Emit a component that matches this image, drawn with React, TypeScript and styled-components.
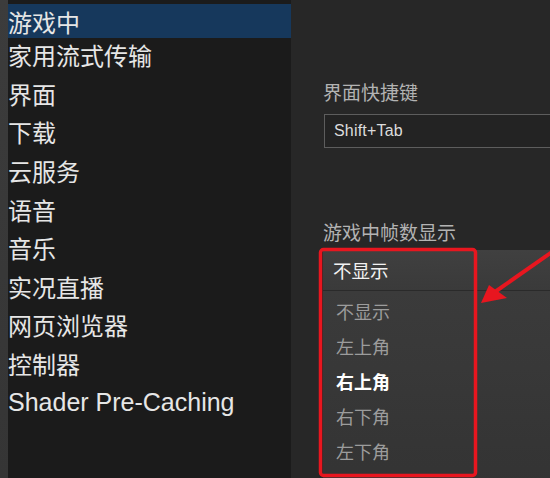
import styled, { createGlobalStyle } from 'styled-components'

const menuItems = ['游戏中', '家用流式传输', '界面', '下载', '云服务', '语音', '音乐', '实况直播', '网页浏览器', '控制器', 'Shader Pre-Caching']
const fpsOptions = ['不显示', '左上角', '右上角', '右下角', '左下角']

const GlobalStyle = createGlobalStyle`
	body {
		margin: 0;
		background: #262626;
		font-family: "Noto Sans CJK SC", "Liberation Sans", sans-serif;
	}
`

export default function App () {
	return <Page>
		<GlobalStyle />
		<EdgeStrip />
		<Menu>
			{menuItems.map((item, i) =>
				<MenuItem key={item} $active={i === 0} $latin={/^[A-Za-z]/.test(item)}>{item}</MenuItem>
			)}
		</Menu>
		<Content>
			<TopStrip />
			<Body>
				<Label>界面快捷键</Label>
				<KeyInput>Shift+Tab</KeyInput>
				<Label $second>游戏中帧数显示</Label>
				<Dropdown>
					<DropdownHeader>不显示</DropdownHeader>
					<DropdownList>
						{fpsOptions.map(opt =>
							<Option key={opt} $selected={opt === '右上角'}>{opt}</Option>
						)}
					</DropdownList>
				</Dropdown>
			</Body>
		</Content>
		<Annotation width="550" height="478" viewBox="0 0 550 478">
			<rect x="320.5" y="249.5" width="155" height="226" rx="3" fill="none" stroke="#e8161f" strokeWidth="3.5" />
			<line x1="552" y1="252" x2="492" y2="294" stroke="#e8161f" strokeWidth="4" />
			<polygon points="481,303 489,285 507,298" fill="#e8161f" />
		</Annotation>
	</Page>
}

const Page = styled.div`
	position: relative;
	display: flex;
	width: 550px;
	height: 478px;
	overflow: hidden;
`

const EdgeStrip = styled.div`
	width: 8px;
	flex-shrink: 0;
	background: linear-gradient(#3c3c3c, #353535);
`

const Menu = styled.div`
	width: 283px;
	flex-shrink: 0;
	background: #1b1b1b;
	padding-top: 4px;
	box-sizing: border-box;
`

const MenuItem = styled.div<{$active?: boolean, $latin?: boolean}>`
	height: ${props => props.$active ? '34px' : '38.6px'};
	box-sizing: border-box;
	padding-bottom: ${props => props.$active ? '0' : '5px'};
	display: flex;
	align-items: center;
	white-space: nowrap;
	color: #e6e6e6;
	background: ${props => props.$active ? '#16385c' : 'transparent'};
	font-size: ${props => props.$latin ? '25px' : '24px'};
	font-family: ${props => props.$latin ? '"Liberation Sans", sans-serif' : '"Noto Sans CJK SC", sans-serif'};
`

const Content = styled.div`
	flex: 1;
	display: flex;
	flex-direction: column;
	background: #272727;
	min-width: 0;
`

const TopStrip = styled.div`
	height: 4px;
	background: linear-gradient(90deg, #1f2a36 0, #1f2a36 92px, #3a3a3a 92px);
`

const Body = styled.div`
	padding: 80px 0 0 32px;
	display: flex;
	flex-direction: column;
`

const Label = styled.div<{$second?: boolean}>`
	font-size: 19px;
	line-height: 24px;
	color: #b3b3b3;
	margin-top: ${props => props.$second ? '72px' : '0'};
	margin-bottom: ${props => props.$second ? '6px' : '10px'};
`

const KeyInput = styled.div`
	height: 34px;
	box-sizing: border-box;
	margin-left: 1px;
	border: 1px solid #5d5d5d;
	border-right: 0;
	background: #232323;
	padding-left: 9px;
	display: flex;
	align-items: center;
	font-family: "Liberation Sans", sans-serif;
	font-size: 16px;
	color: #dcdcdc;
	letter-spacing: 0.2px;
`

const Dropdown = styled.div`
	display: flex;
	flex-direction: column;
`

const DropdownHeader = styled.div`
	height: 40px;
	display: flex;
	align-items: center;
	padding-left: 10px;
	background: linear-gradient(#404040, #3a3a3a);
	border-bottom: 1px solid #2a2a2a;
	font-size: 18.5px;
	color: #f2f2f2;
`

const DropdownList = styled.div`
	padding-top: 2px;
	height: 200px;
	background: linear-gradient(#3b3b3b, #333333);
`

const Option = styled.div<{$selected?: boolean}>`
	height: 35px;
	display: flex;
	align-items: center;
	padding-left: 13px;
	font-size: 18px;
	color: ${props => props.$selected ? '#ffffff' : '#9c9c9c'};
	font-weight: ${props => props.$selected ? 700 : 400};
`

const Annotation = styled.svg`
	position: absolute;
	left: 0;
	top: 0;
	pointer-events: none;
`
